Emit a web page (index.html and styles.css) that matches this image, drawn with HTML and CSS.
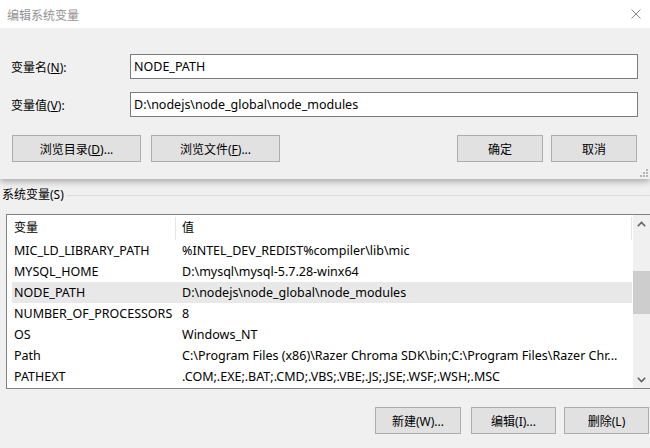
FILE: index.html
```html
<!DOCTYPE html>
<html>
<head>
<meta charset="utf-8">
<link rel="stylesheet" href="styles.css">
</head>
<body>
<div class="screen">
  <div class="dialog">
    <div class="titlebar">
      <span class="title">编辑系统变量</span>
      <svg class="close" width="10" height="10" viewBox="0 0 10 10"><path d="M0.5 0.5L9.5 9.5M9.5 0.5L0.5 9.5" stroke="#8a8a8a" stroke-width="1" fill="none"/></svg>
    </div>
    <div class="dbody">
      <div class="field"><span class="lbl">变量名(<u>N</u>):</span><div class="input">NODE_PATH</div></div>
      <div class="field"><span class="lbl">变量值(<u>V</u>):</span><div class="input">D:\nodejs\node_global\node_modules</div></div>
      <div class="btnrow">
        <button class="btn wide">浏览目录(<u>D</u>)...</button>
        <button class="btn wide">浏览文件(<u>F</u>)...</button>
        <span class="spacer"></span>
        <button class="btn">确定</button>
        <button class="btn last">取消</button>
      </div>
      <svg class="grip" width="9" height="9" viewBox="0 0 9 9" fill="#b4b4b4">
        <rect x="7" y="0" width="2" height="2"/>
        <rect x="4" y="3" width="2" height="2"/><rect x="7" y="3" width="2" height="2"/>
        <rect x="1" y="6" width="2" height="2"/><rect x="4" y="6" width="2" height="2"/><rect x="7" y="6" width="2" height="2"/>
      </svg>
    </div>
  </div>
  <div class="bg">
    <div class="group"><span class="glabel">系统变量(S)</span><span class="gline"></span></div>
    <div class="list">
      <div class="listmain">
        <div class="hdr"><div class="c1">变量</div><div class="c2">值</div></div>
        <div class="row"><div class="c1">MIC_LD_LIBRARY_PATH</div><div class="c2">%INTEL_DEV_REDIST%compiler\lib\mic</div></div>
        <div class="row"><div class="c1">MYSQL_HOME</div><div class="c2">D:\mysql\mysql-5.7.28-winx64</div></div>
        <div class="row sel"><div class="c1">NODE_PATH</div><div class="c2">D:\nodejs\node_global\node_modules</div></div>
        <div class="row"><div class="c1">NUMBER_OF_PROCESSORS</div><div class="c2">8</div></div>
        <div class="row"><div class="c1">OS</div><div class="c2">Windows_NT</div></div>
        <div class="row"><div class="c1">Path</div><div class="c2">C:\Program Files (x86)\Razer Chroma SDK\bin;C:\Program Files\Razer Chr...</div></div>
        <div class="row"><div class="c1">PATHEXT</div><div class="c2">.COM;.EXE;.BAT;.CMD;.VBS;.VBE;.JS;.JSE;.WSF;.WSH;.MSC</div></div>
      </div>
      <div class="scroll">
        <div class="sbtn"><svg width="9" height="6" viewBox="0 0 9 6"><path d="M0.8 5.2L4.5 1.5L8.2 5.2" stroke="#606060" stroke-width="1.6" fill="none"/></svg></div>
        <div class="track"><div class="thumb"></div></div>
        <div class="sbtn"><svg width="9" height="6" viewBox="0 0 9 6"><path d="M0.8 0.8L4.5 4.5L8.2 0.8" stroke="#606060" stroke-width="1.6" fill="none"/></svg></div>
      </div>
    </div>
    <div class="bottom">
      <button class="btn b1">新建(W)...</button>
      <button class="btn b2">编辑(I)...</button>
      <button class="btn b3">删除(L)</button>
    </div>
  </div>
</div>
</body>
</html>
```

FILE: styles.css
```css
html, body {
  margin: 0;
  padding: 0;
}
body {
  width: 650px;
  height: 448px;
  overflow: hidden;
  background: #f0f0f0;
  font-family: "Noto Sans", "Noto Sans CJK SC", sans-serif;
  font-size: 12px;
  color: #000;
}
.screen {
  display: flex;
  flex-direction: column;
  height: 448px;
}
.dialog {
  position: relative;
  z-index: 2;
  height: 179px;
  flex: none;
  background: #f0f0f0;
  box-shadow: 0 2px 7px rgba(0, 0, 0, 0.35);
  display: flex;
  flex-direction: column;
}
.titlebar {
  height: 28px;
  flex: none;
  background: #fff;
  display: flex;
  align-items: center;
  justify-content: space-between;
  padding: 0 9px 0 7px;
}
.title {
  color: #929292;
  font-size: 12px;
  font-family: "Noto Sans CJK SC", sans-serif;
}
.close {
  display: block;
}
.dbody {
  flex: 1;
  position: relative;
  padding: 26px 12px 0 11px;
  display: flex;
  flex-direction: column;
  gap: 13px;
}
.field {
  display: flex;
  align-items: center;
  height: 25px;
}
.lbl {
  width: 119px;
  flex: none;
}
.input {
  flex: 1;
  height: 25px;
  box-sizing: border-box;
  border: 1px solid #7a7a7a;
  background: #fff;
  padding-left: 3px;
  line-height: 23px;
  font-size: 12.5px;
  white-space: nowrap;
}
.btnrow {
  display: flex;
  margin-top: 5px;
  padding-left: 1px;
  gap: 10px;
}
.spacer {
  flex: 1;
}
.btn {
  height: 27px;
  width: 86px;
  box-sizing: border-box;
  border: 1px solid #adadad;
  background: #e1e1e1;
  font-family: inherit;
  font-size: 12px;
  color: #000;
  padding: 0;
  margin: 0;
}
.btn.wide {
  width: 129px;
}
.btn.last {
  margin-left: -2px;
  margin-right: 1px;
}
.grip {
  position: absolute;
  right: 2px;
  bottom: 1px;
}
.bg {
  flex: 1;
  display: flex;
  flex-direction: column;
}
.group {
  display: flex;
  align-items: center;
  height: 14px;
  margin-top: 9px;
  padding-left: 2px;
}
.glabel {
  line-height: 14px;
}
.gline {
  flex: 1;
  height: 1px;
  background: #dcdcdc;
  margin-left: 3px;
}
.list {
  margin-top: 12px;
  margin-left: 6px;
  height: 175px;
  box-sizing: border-box;
  border: 1px solid #828282;
  border-right: none;
  background: #fff;
  display: flex;
}
.listmain {
  flex: 1;
  padding-left: 5px;
  padding-right: 1px;
}
.hdr {
  display: flex;
  height: 25px;
}
.hdr .c1, .hdr .c2 {
  line-height: 25px;
  position: relative;
}
.hdr .c1::after, .hdr .c2::after {
  content: "";
  position: absolute;
  right: 0;
  top: 2px;
  bottom: 0;
  width: 1px;
  background: #e5e5e5;
}
.c1 {
  width: 164px;
  box-sizing: border-box;
  padding-left: 2px;
  flex: none;
  white-space: nowrap;
}
.c2 {
  flex: 1;
  padding-left: 6px;
  white-space: nowrap;
  overflow: hidden;
}
.row {
  display: flex;
  height: 21px;
  line-height: 21px;
  font-size: 12.5px;
}
.row.sel {
  background: #e8e8e8;
}
.scroll {
  width: 17px;
  flex: none;
  background: #f0f0f0;
  display: flex;
  flex-direction: column;
}
.sbtn {
  height: 17px;
  display: flex;
  align-items: center;
  justify-content: center;
}
.track {
  flex: 1;
  padding-top: 39px;
}
.thumb {
  height: 43px;
  background: #cdcdcd;
}
.bottom {
  display: flex;
  justify-content: flex-end;
  margin-top: 18px;
  padding-right: 1px;
}
.b2 {
  margin-left: 10px;
  width: 85px;
}
.b3 {
  margin-left: 8px;
  width: 85px;
}
```
